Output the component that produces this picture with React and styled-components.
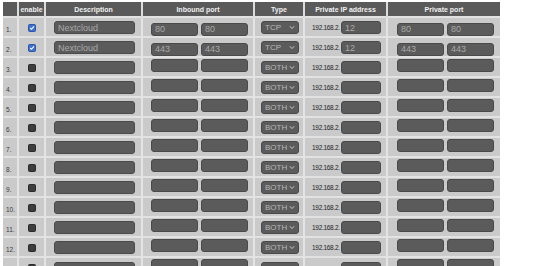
import React from 'react';
import styled, { createGlobalStyle } from 'styled-components';

const GlobalStyle = createGlobalStyle`
  html, body {
    margin: 0;
    padding: 0;
    background: #ffffff;
    overflow: hidden;
    height: 266px;
  }
  * {
    box-sizing: border-box;
  }
`;

const Page = styled.div`
  padding: 2px 0 0 3px;
  font-family: 'Liberation Sans', Arial, sans-serif;
`;

const Table = styled.table`
  border-collapse: collapse;
  table-layout: fixed;
  width: 497px;
  background: #cacaca;
`;

const HeadCell = styled.th`
  width: ${(p) => p.w}px;
  height: 15px;
  padding: 0;
  background: #5a5a5a;
  color: #f0f0f0;
  font-size: 7px;
  font-weight: bold;
  text-align: center;
  border-left: 2px solid #dcdcdc;
  &:first-child {
    border-left: none;
  }
`;

const Row = styled.tr`
  height: 19.83px;
  border-top: 2px solid #e2e2e2;
`;

const Cell = styled.td`
  padding: 0 0 0 ${(p) => p.pl || 0}px;
  border-left: 2px solid #e4e4e4;
  vertical-align: middle;
  text-align: ${(p) => p.align || 'left'};
  white-space: nowrap;
  &:first-child {
    border-left: none;
  }
`;

const Num = styled.span`
  font-size: 6.5px;
  color: #3a3a3a;
  padding-left: 3px;
`;

const Check = styled.span`
  display: inline-block;
  width: 8px;
  height: 8px;
  border-radius: 1.5px;
  background: ${(p) => (p.on ? '#3f6fd0' : '#3c3c3c')};
  border: 1px solid ${(p) => (p.on ? '#2d55a8' : '#2a2a2a')};
  vertical-align: middle;
  position: relative;
  svg {
    position: absolute;
    left: 0;
    top: 0;
  }
`;

const Field = styled.span`
  display: inline-flex;
  align-items: center;
  width: ${(p) => p.w}px;
  height: 13px;
  padding-left: 3px;
  background: #5b5b5b;
  border: 1px solid #4a4a4a;
  border-radius: 3px;
  color: #a9a9a9;
  font-size: 9px;
  vertical-align: middle;
  overflow: hidden;
  white-space: nowrap;
`;

const Pair = styled.span`
  display: inline-flex;
  align-items: center;
`;

const Dash = styled.span`
  width: 3px;
  font-size: 5px;
  color: #eaeaea;
  text-align: center;
`;

const Select = styled.span`
  display: inline-flex;
  align-items: center;
  justify-content: space-between;
  width: 38px;
  height: 13px;
  padding: 0 3px;
  background: #5b5b5b;
  border: 1px solid #4a4a4a;
  border-radius: 3px;
  color: #b8b8b8;
  font-size: 8px;
  vertical-align: middle;
`;

const Prefix = styled.span`
  display: inline-block;
  width: 29px;
  font-size: 6.5px;
  color: #1e1e1e;
  letter-spacing: -0.3px;
  vertical-align: middle;
`;

const Chevron = () => (
  <svg width="6" height="5" viewBox="0 0 6 5">
    <path d="M0.8 1.2 L3 3.6 L5.2 1.2" fill="none" stroke="#c8c8c8" strokeWidth="1" />
  </svg>
);

const Tick = () => (
  <svg width="6" height="6" viewBox="0 0 6 6">
    <path d="M1.2 3 L2.5 4.3 L5 1.3" fill="none" stroke="#ffffff" strokeWidth="1.1" />
  </svg>
);

const columns = [
  { label: '', w: 15 },
  { label: 'enable', w: 27 },
  { label: 'Description', w: 97 },
  { label: 'Inbound port', w: 112 },
  { label: 'Type', w: 50 },
  { label: 'Private IP address', w: 83 },
  { label: 'Private port', w: 113 },
];

const rows = [
  { on: true, desc: 'Nextcloud', ports: ['80', '80'], type: 'TCP', ip: '12', priv: ['80', '80'] },
  { on: true, desc: 'Nextcloud', ports: ['443', '443'], type: 'TCP', ip: '12', priv: ['443', '443'] },
  ...Array.from({ length: 11 }, () => ({
    on: false,
    desc: '',
    ports: ['', ''],
    type: 'BOTH',
    ip: '',
    priv: ['', ''],
  })),
];

const PortPair = ({ values }) => (
  <Pair>
    <Field w={47}>{values[0]}</Field>
    <Dash>-</Dash>
    <Field w={47}>{values[1]}</Field>
  </Pair>
);

export default function App() {
  return (
    <>
      <GlobalStyle />
      <Page>
        <Table>
          <thead>
            <tr>
              {columns.map((c) => (
                <HeadCell key={c.label || 'n'} w={c.w}>
                  {c.label}
                </HeadCell>
              ))}
            </tr>
          </thead>
          <tbody>
            {rows.map((r, i) => (
              <Row key={i}>
                <Cell>
                  <Num>{i + 1}.</Num>
                </Cell>
                <Cell align="center">
                  <Check on={r.on}>{r.on && <Tick />}</Check>
                </Cell>
                <Cell pl={8}>
                  <Field w={81}>{r.desc}</Field>
                </Cell>
                <Cell pl={8}>
                  <PortPair values={r.ports} />
                </Cell>
                <Cell pl={6}>
                  <Select>
                    <span>{r.type}</span>
                    <Chevron />
                  </Select>
                </Cell>
                <Cell pl={7}>
                  <Prefix>192.168.2.</Prefix>
                  <Field w={40}>{r.ip}</Field>
                </Cell>
                <Cell pl={9}>
                  <PortPair values={r.priv} />
                </Cell>
              </Row>
            ))}
          </tbody>
        </Table>
      </Page>
    </>
  );
}
